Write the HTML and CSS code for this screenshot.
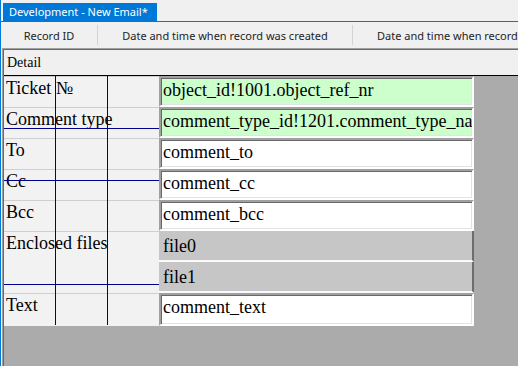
FILE: index.html
```html
<!DOCTYPE html>
<html lang="en">
<head>
    <meta charset="UTF-8">
    <title>Development - New Email*</title>
    <link rel="stylesheet" href="styles.css">
</head>
<body>
    <div class="window">
        <div class="tabbar">
            <div class="tab">Development - New Email*</div>
        </div>
        <div class="columns">
            <div class="col col-id">Record ID</div>
            <div class="sep"></div>
            <div class="col col-date">Date and time when record was created</div>
            <div class="sep"></div>
            <div class="col col-date">Date and time when record was created</div>
        </div>
        <div class="panel">
            <div class="panel-inner">
                <div class="detail">Detail</div>
                <div class="form">
                    <div class="labels">
                        <div class="label">Ticket №</div>
                        <div class="label">Comment type</div>
                        <div class="label">To</div>
                        <div class="label">Cc</div>
                        <div class="label">Bcc</div>
                        <div class="label label-files">Enclosed files</div>
                        <div class="label label-text">Text</div>
                    </div>
                    <div class="values">
                        <div class="field lookup">object_id!1001.object_ref_nr</div>
                        <div class="field lookup">comment_type_id!1201.comment_type_name</div>
                        <div class="field">comment_to</div>
                        <div class="field">comment_cc</div>
                        <div class="field">comment_bcc</div>
                        <div class="files">
                            <div class="file">file0</div>
                            <div class="file">file1</div>
                        </div>
                        <div class="field field-text">comment_text</div>
                    </div>

                    <!-- design grid overlay -->
                    <div class="guide guide-v guide-v1"></div>
                    <div class="guide guide-v guide-v2"></div>
                    <div class="guide guide-h guide-h1"></div>
                    <div class="guide guide-h guide-h2"></div>
                    <div class="guide guide-h guide-h3"></div>
                </div>
            </div>
        </div>
    </div>
</body>
</html>
```

FILE: styles.css
```css
* {
    box-sizing: border-box;
}

html, body {
    margin: 0;
}

body {
    width: 518px;
    height: 366px;
    overflow: hidden;
    background: #f0f0f0;
    font-family: 'Noto Sans', sans-serif;
}

.window {
    height: 366px;
    border-left: 1px solid #0078d7;
    display: flex;
    flex-direction: column;
}

/* tab strip */
.tabbar {
    height: 22px;
    padding: 3px 0 0 2px;
    border-bottom: 1px solid #0078d7;
    display: flex;
}

.tab {
    width: 154px;
    height: 18px;
    padding-left: 6px;
    background: #0078d7;
    color: #fff;
    font-size: 11px;
    line-height: 18px;
    white-space: nowrap;
}

/* column headers */
.columns {
    height: 26px;
    display: flex;
    align-items: center;
    white-space: nowrap;
    overflow: hidden;
    font-size: 11px;
    color: #1e1e1e;
}

.col {
    flex-shrink: 0;
    text-align: center;
}

.col-id {
    width: 96px;
}

.col-date {
    width: 254px;
}

.col-date:last-child {
    text-align: left;
    padding-left: 24px;
}

.sep {
    flex-shrink: 0;
    width: 1px;
    height: 20px;
    background: #d4d4d4;
}

/* sunken detail panel */
.panel {
    flex: 1;
    margin-left: 1px;
    border-top: 1px solid #a0a0a0;
    border-left: 1px solid #a0a0a0;
    display: flex;
}

.panel-inner {
    flex: 1;
    border-top: 1px solid #696969;
    border-left: 1px solid #696969;
    display: flex;
    flex-direction: column;
}

.detail {
    height: 26px;
    padding: 5px 0 0 3px;
    border-bottom: 1px solid #000;
    font-family: 'Liberation Serif', serif;
    font-size: 14px;
    line-height: 16px;
}

.form {
    position: relative;
    flex: 1;
    display: flex;
    align-items: flex-start;
    background: #ababab;
    font-family: 'Liberation Serif', serif;
    font-size: 18px;
    color: #000;
}

.labels {
    width: 155px;
    display: flex;
    flex-direction: column;
}

.label {
    height: 31px;
    padding: 1px 0 0 2px;
    background: #f2f2f2;
    border-top: 1px solid #cfcfcf;
    line-height: 20px;
    white-space: nowrap;
}

.label-files {
    height: 62px;
}

.label-text {
    height: 33px;
}

.values {
    width: 315px;
    display: flex;
    flex-direction: column;
}

.field {
    height: 31px;
    padding: 1px 0 0 2px;
    background: #fff;
    border: 2px solid;
    border-color: #a0a0a0 #fff #fff #a0a0a0;
    box-shadow: inset 1px 1px 0 #696969, inset -1px -1px 0 #e3e3e3;
    line-height: 22px;
    white-space: nowrap;
    overflow: hidden;
}

.lookup {
    background: #ccffcc;
}

.field-text {
    height: 33px;
}

.files {
    height: 62px;
    display: flex;
    flex-direction: column;
    background: #f0f0f0;
}

.file {
    height: 31px;
    padding: 4px 0 0 4px;
    background: #c6c6c6;
    border-right: 2px solid #6d6d6d;
    border-bottom: 2px solid #fafafa;
    line-height: 22px;
}

/* navy guide lines drawn over the labels */
.guide {
    position: absolute;
    background: #00008b;
}

.guide-v {
    top: 0;
    width: 1px;
    height: 249px;
}

.guide-v1 {
    left: 51px;
}

.guide-v2 {
    left: 103px;
}

.guide-h {
    left: 0;
    width: 155px;
    height: 1px;
}

.guide-h1 {
    top: 52px;
}

.guide-h2 {
    top: 104px;
}

.guide-h3 {
    top: 208px;
}
```
